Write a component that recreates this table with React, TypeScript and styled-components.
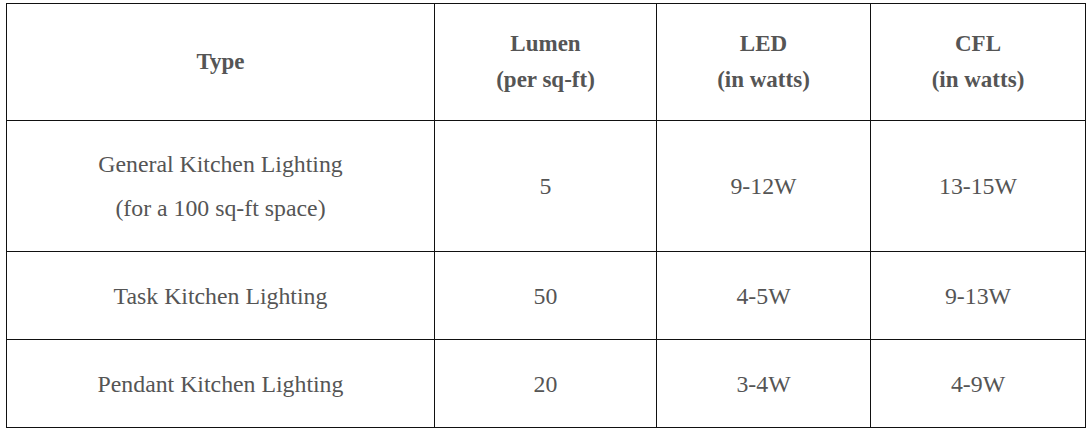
import React from 'react';
import styled, { createGlobalStyle } from 'styled-components';

const GlobalStyle = createGlobalStyle`
  body {
    margin: 0;
    background: #fff;
  }
`;

const Wrapper = styled.div`
  padding: 3px 0 0 6px;
`;

const Table = styled.table`
  width: 1079px;
  border-collapse: collapse;
  table-layout: fixed;
  font-family: 'Liberation Serif', 'Times New Roman', serif;
  color: #555;
`;

const Row = styled.tr<{ $height: number }>`
  height: ${(p) => p.$height}px;
`;

const HeadCell = styled.th`
  border: 1px solid #111;
  font-size: 23px;
  font-weight: bold;
  text-align: center;
  vertical-align: middle;
  line-height: 36px;
  padding: 0;
`;

const Cell = styled.td`
  border: 1px solid #111;
  font-size: 23.8px;
  text-align: center;
  vertical-align: middle;
  line-height: 44px;
  padding: 0;
`;

type Entry = {
  type: string[];
  lumen: string;
  led: string;
  cfl: string;
  height: number;
};

const rows: Entry[] = [
  {
    type: ['General Kitchen Lighting', '(for a 100 sq-ft space)'],
    lumen: '5',
    led: '9-12W',
    cfl: '13-15W',
    height: 131,
  },
  { type: ['Task Kitchen Lighting'], lumen: '50', led: '4-5W', cfl: '9-13W', height: 88 },
  { type: ['Pendant Kitchen Lighting'], lumen: '20', led: '3-4W', cfl: '4-9W', height: 88 },
];

const App: React.FC = () => (
  <>
    <GlobalStyle />
    <Wrapper>
      <Table>
        <colgroup>
          <col style={{ width: 428 }} />
          <col style={{ width: 222 }} />
          <col style={{ width: 214 }} />
          <col style={{ width: 215 }} />
        </colgroup>
        <thead>
          <Row $height={117}>
            <HeadCell>Type</HeadCell>
            <HeadCell>
              Lumen
              <br />
              (per sq-ft)
            </HeadCell>
            <HeadCell>
              LED
              <br />
              (in watts)
            </HeadCell>
            <HeadCell>
              CFL
              <br />
              (in watts)
            </HeadCell>
          </Row>
        </thead>
        <tbody>
          {rows.map((r) => (
            <Row key={r.type[0]} $height={r.height}>
              <Cell>
                {r.type.map((line, i) => (
                  <React.Fragment key={line}>
                    {i > 0 && <br />}
                    {line}
                  </React.Fragment>
                ))}
              </Cell>
              <Cell>{r.lumen}</Cell>
              <Cell>{r.led}</Cell>
              <Cell>{r.cfl}</Cell>
            </Row>
          ))}
        </tbody>
      </Table>
    </Wrapper>
  </>
);

export default App;
